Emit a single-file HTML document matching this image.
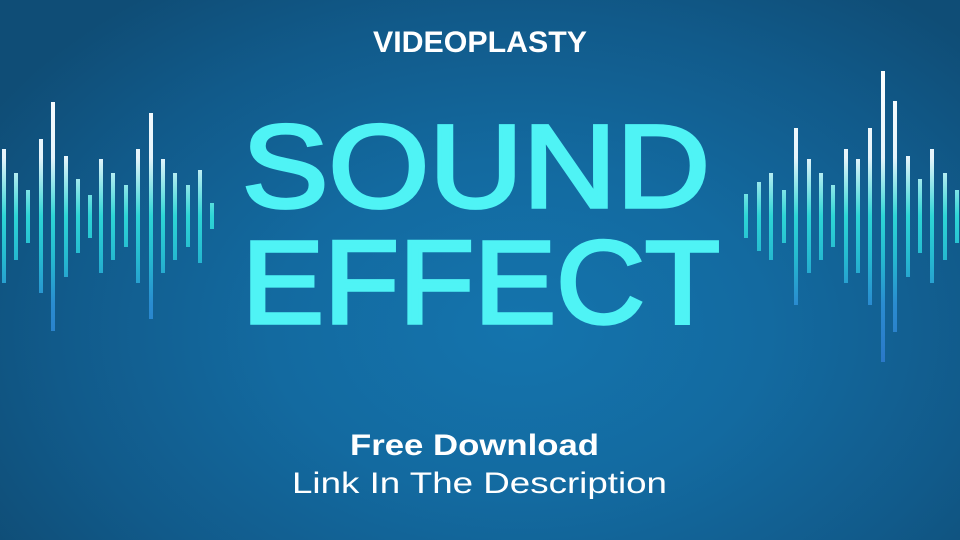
<!DOCTYPE html>
<html><head><meta charset="utf-8"><style>
html,body{margin:0;padding:0;width:960px;height:540px;overflow:hidden}
body{background:radial-gradient(ellipse 620px 420px at 520px 330px,#1474ad 0%,#136aa0 40%,#115a8a 75%,#0f4d76 100%)}
svg{position:absolute;left:0;top:0}
</style></head><body>
<svg width="960" height="540" xmlns="http://www.w3.org/2000/svg">
<defs>
<linearGradient id="g" gradientUnits="userSpaceOnUse" x1="0" y1="70" x2="0" y2="362">
<stop offset="0" stop-color="#ffffff"/>
<stop offset="0.3" stop-color="#e6f4fb"/>
<stop offset="0.5" stop-color="#2dd6d6"/>
<stop offset="0.65" stop-color="#25b8d0"/>
<stop offset="0.8" stop-color="#2a8cd0"/>
<stop offset="1" stop-color="#2a78c8"/>
</linearGradient>
</defs>
<g fill="url(#g)">
<rect x="2" y="149" width="4" height="134"/>
<rect x="14" y="173" width="4" height="87"/>
<rect x="26" y="190" width="4" height="53"/>
<rect x="39" y="139" width="4" height="154"/>
<rect x="51" y="102" width="4" height="229"/>
<rect x="64" y="156" width="4" height="121"/>
<rect x="76" y="179" width="4" height="74"/>
<rect x="88" y="195" width="4" height="43"/>
<rect x="99" y="159" width="4" height="114"/>
<rect x="111" y="173" width="4" height="87"/>
<rect x="124" y="185" width="4" height="62"/>
<rect x="136" y="149" width="4" height="134"/>
<rect x="149" y="113" width="4" height="206"/>
<rect x="161" y="159" width="4" height="114"/>
<rect x="173" y="173" width="4" height="87"/>
<rect x="186" y="185" width="4" height="62"/>
<rect x="198" y="170" width="4" height="93"/>
<rect x="210" y="203" width="4" height="26"/>

<rect x="744" y="194" width="4" height="44"/>
<rect x="757" y="182" width="4" height="69"/>
<rect x="769" y="173" width="4" height="87"/>
<rect x="782" y="190" width="4" height="53"/>
<rect x="794" y="128" width="4" height="177"/>
<rect x="807" y="159" width="4" height="114"/>
<rect x="819" y="173" width="4" height="87"/>
<rect x="831" y="185" width="4" height="62"/>
<rect x="844" y="149" width="4" height="134"/>
<rect x="856" y="159" width="4" height="114"/>
<rect x="868" y="128" width="4" height="177"/>
<rect x="881" y="71" width="4" height="291"/>
<rect x="893" y="101" width="4" height="231"/>
<rect x="906" y="156" width="4" height="121"/>
<rect x="918" y="179" width="4" height="74"/>
<rect x="930" y="149" width="4" height="134"/>
<rect x="943" y="173" width="4" height="87"/>
<rect x="955" y="190" width="4" height="53"/>
</g>
<g font-family="Liberation Sans, sans-serif">
<text x="373" y="52" font-size="30" font-weight="bold" fill="#fff" textLength="214" lengthAdjust="spacingAndGlyphs">VIDEOPLASTY</text>
<text x="242" y="207" font-size="118" fill="#4ff3f5" stroke="#4ff3f5" stroke-width="3.5" textLength="468" lengthAdjust="spacingAndGlyphs">SOUND</text>
<text x="242" y="323" font-size="118" fill="#4ff3f5" stroke="#4ff3f5" stroke-width="3.5" textLength="478" lengthAdjust="spacingAndGlyphs">EFFECT</text>
<text x="350" y="455" font-size="30" font-weight="bold" fill="#fff" textLength="249" lengthAdjust="spacingAndGlyphs">Free Download</text>
<text x="292" y="493" font-size="30" fill="#fff" textLength="375" lengthAdjust="spacingAndGlyphs">Link In The Description</text>
</g>
</svg>
</body></html>
